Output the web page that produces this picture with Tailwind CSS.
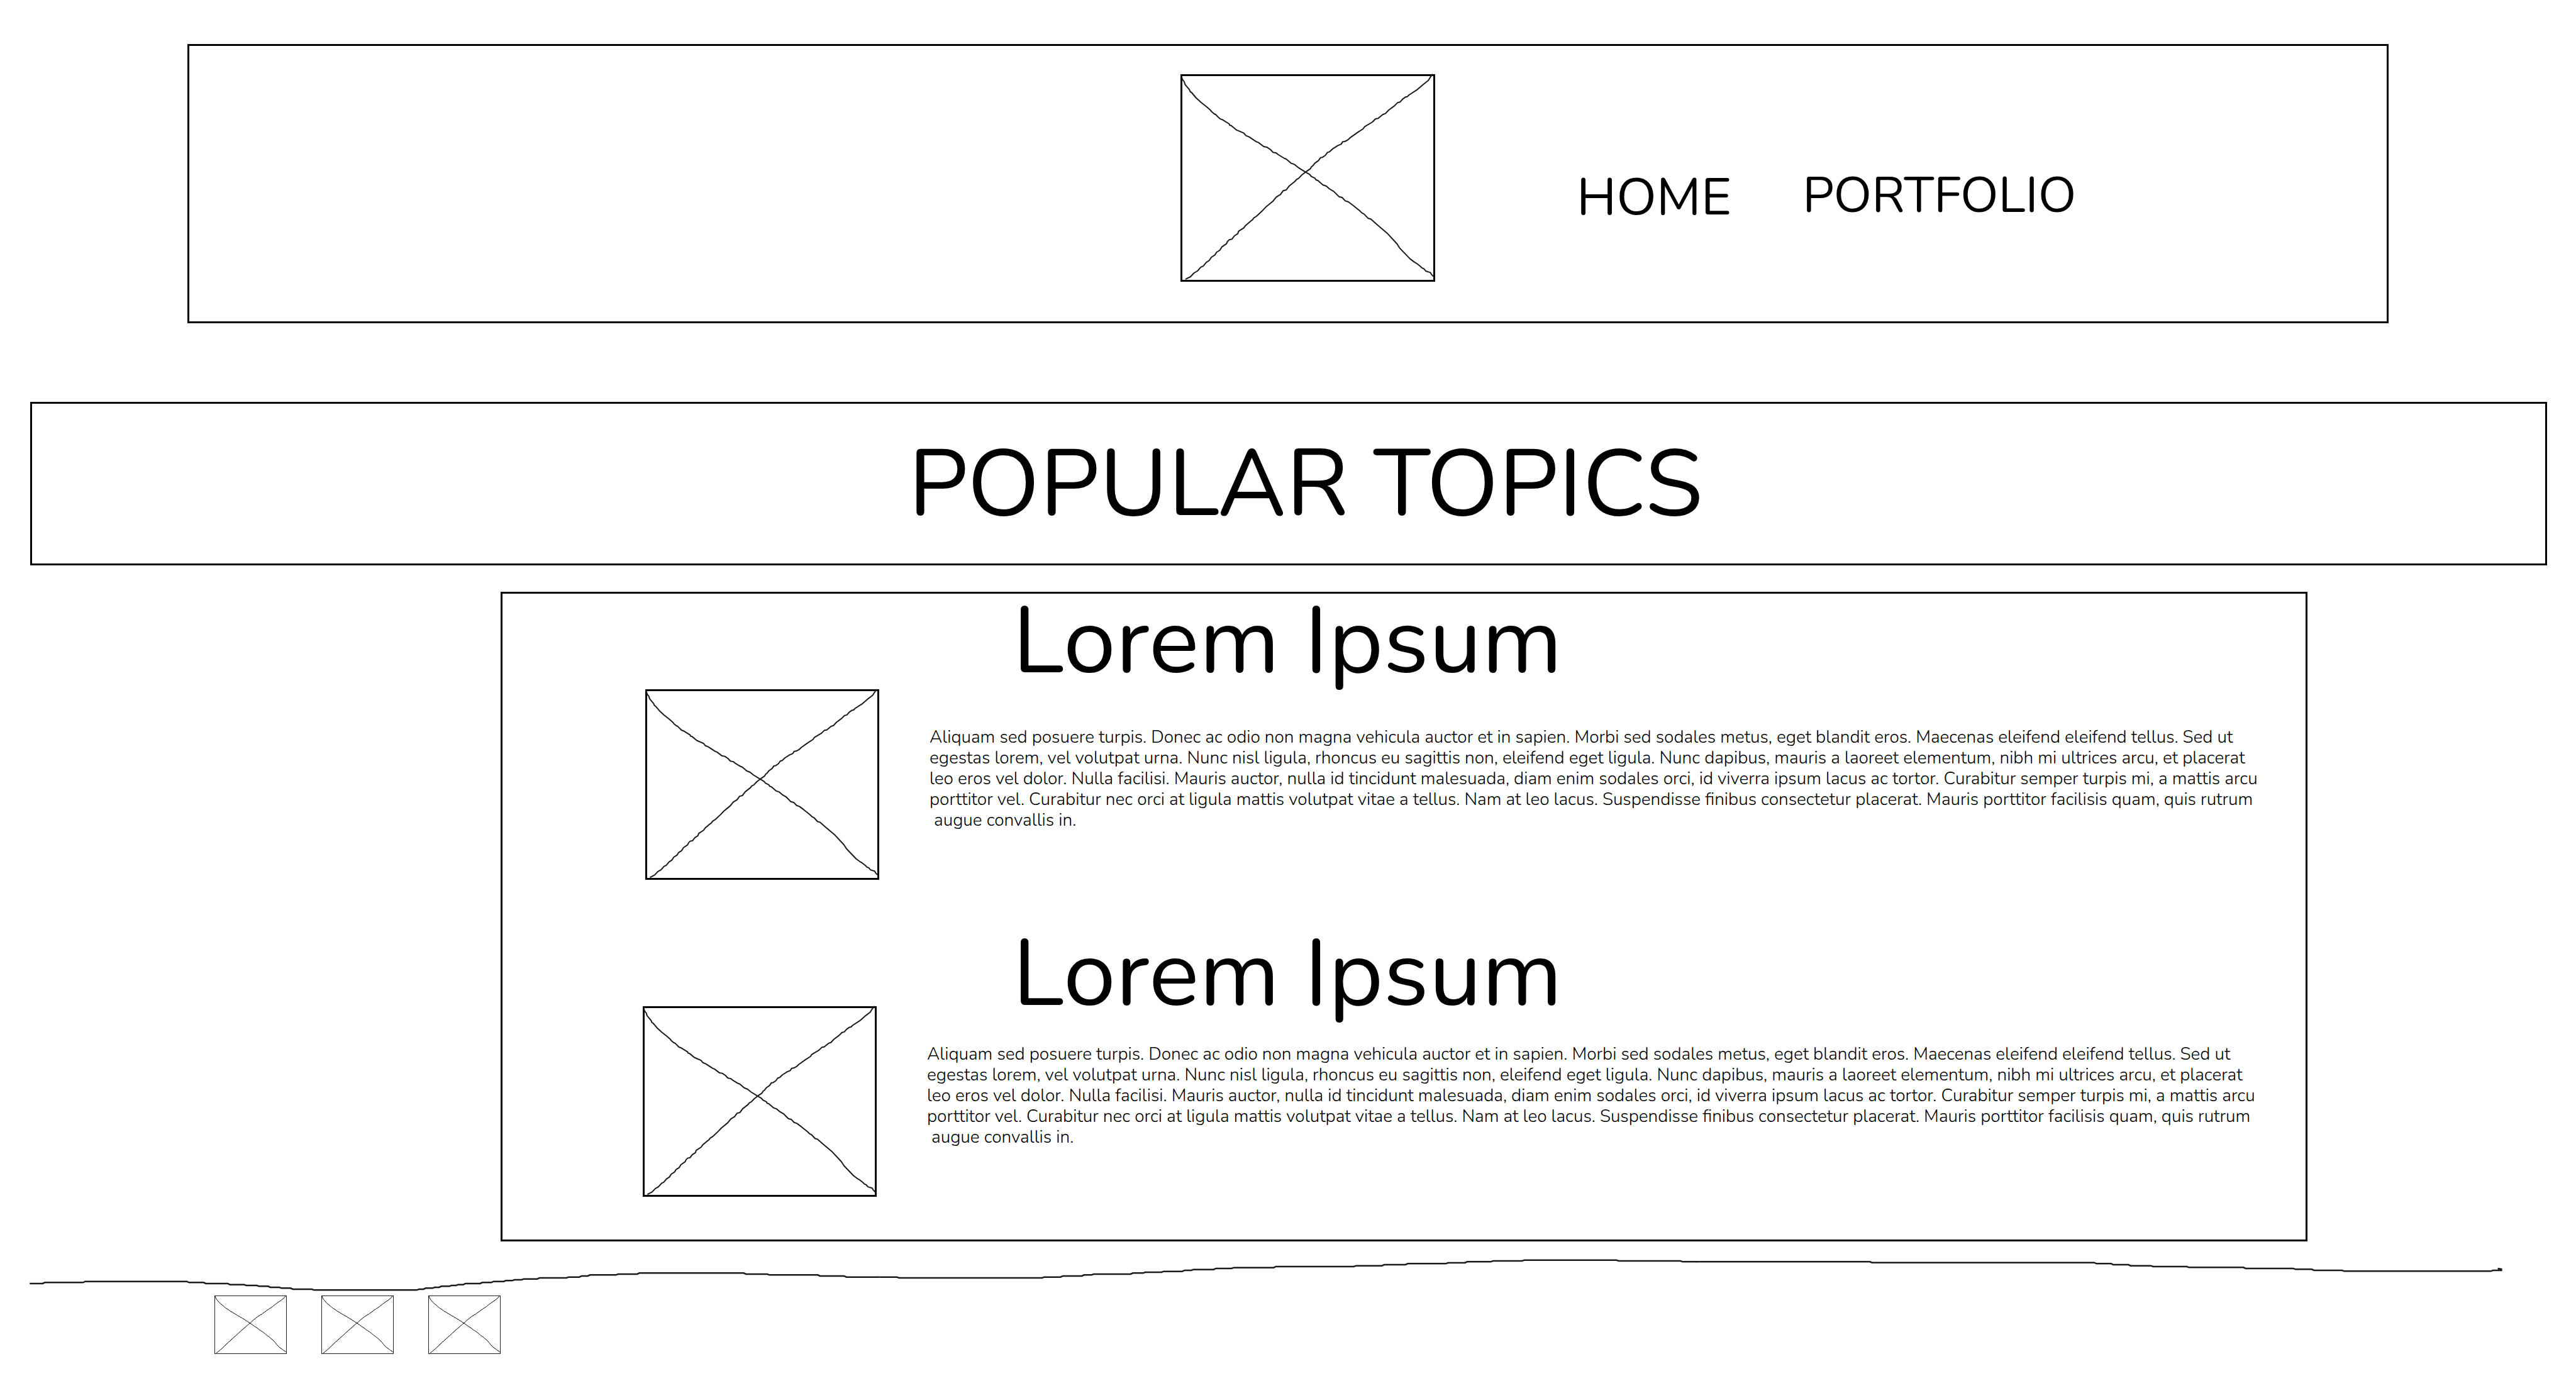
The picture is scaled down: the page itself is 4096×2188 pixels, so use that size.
<!DOCTYPE html>
<html lang="en">
<head>
<meta charset="utf-8">
<meta name="viewport" content="width=device-width, initial-scale=1">
<title>Popular Topics</title>
<script src="https://cdn.jsdelivr.net/npm/@tailwindcss/browser@4"></script>
</head>
<body class="bg-white font-['Nunito',sans-serif] text-black">

<!-- Hand-drawn cross shared by every picture placeholder -->
<svg class="absolute size-0" aria-hidden="true">
  <defs>
    <g id="cross" fill="none" stroke-linejoin="round" stroke-linecap="round">
      <path vector-effect="non-scaling-stroke" d="M60 58L66 78L75 90L79 103L100 128L104 138L110 141L130 165L155 188L180 208L200 225L205 232L218 243L225 246L245 266L258 271L290 291L292 297L300 299L325 320L360 335L370 347L385 353L420 376L430 380L455 399L472 403L488 414L500 427L515 430L525 438L555 456L562 458L585 478L603 485L620 499L655 521L675 532L682 541L700 550L705 558L714 561L738 582L755 588L768 600L790 613L815 638L830 642L845 658L860 663L880 678L910 702L915 706L925 716L935 721L955 742L967 745L1000 774L1045 812L1085 855L1093 864L1105 883L1155 935L1175 950L1187 957L1205 971L1210 977L1222 983L1230 993L1252 1000L1258 1010L1270 1022"/>
      <path vector-effect="non-scaling-stroke" d="M83 1031L105 1020L122 1002L138 993L155 974L165 970L180 952L195 942L205 927L222 916L230 903L245 894L255 878L277 863L282 852L290 844L303 841L315 825L331 815L335 803L360 787L368 776L395 753L402 748L407 740L420 732L450 704L465 688L500 659L515 640L535 628L548 610L563 606L577 587L605 565L612 556L622 551L637 535L655 521L678 505L684 495L690 491L700 478L717 466L727 452L735 451L750 441L760 427L770 424L785 410L810 394L825 388L833 376L843 375L858 367L870 356L905 331L930 315L938 304L975 282L990 267L1002 265L1025 246L1037 242L1053 225L1080 205L1095 190L1107 187L1120 172L1133 163L1142 161L1150 153L1190 127L1220 101L1242 84L1252 68L1262 55"/>
    </g>
  </defs>
</svg>

<header class="mt-[70px] mr-[298px] ml-[298px] flex h-[444px] items-start border-3 border-black pt-[45px] pl-[1576px]">
  <svg class="h-[330px] w-[405px] shrink-0 overflow-visible border-3 border-black stroke-[#1a1a1a] stroke-2" viewBox="66 63 1200 972" preserveAspectRatio="none" role="img" aria-label="Logo"><use href="#cross"/></svg>
  <nav class="mt-[154px] ml-[225px] flex items-start gap-[113px] leading-none">
    <a href="#home" class="text-[83px] leading-none">HOME</a>
    <a href="#portfolio" class="text-[79px] leading-none">PORTFOLIO</a>
  </nav>
</header>

<main>
  <div class="mt-[125px] mr-[46px] ml-12 flex h-[260px] justify-center border-3 border-black pt-[53px] pl-[54px]">
    <h1 class="text-[150px] leading-none">POPULAR TOPICS</h1>
  </div>

  <section class="mt-[42px] mr-[427px] ml-[796px] border-3 border-black pt-px pb-[68px]">
    <article class="flex items-start pl-[227px]">
      <svg class="mt-[151px] h-[303px] w-[372px] shrink-0 overflow-visible border-3 border-black stroke-[#1a1a1a] stroke-2" viewBox="66 63 1200 972" preserveAspectRatio="none" role="img" aria-label="Topic picture"><use href="#cross"/></svg>
      <div class="ml-20">
        <h2 class="ml-[132px] text-[150px] leading-none">Lorem Ipsum</h2>
        <p class="mt-[61px] text-[28px] leading-[33px] font-[360] whitespace-nowrap">Aliquam sed posuere turpis. Donec ac odio non magna vehicula auctor et in sapien. Morbi sed sodales metus, eget blandit eros. Maecenas eleifend eleifend tellus. Sed ut<br>egestas lorem, vel volutpat urna. Nunc nisl ligula, rhoncus eu sagittis non, eleifend eget ligula. Nunc dapibus, mauris a laoreet elementum, nibh mi ultrices arcu, et placerat<br>leo eros vel dolor. Nulla facilisi. Mauris auctor, nulla id tincidunt malesuada, diam enim sodales orci, id viverra ipsum lacus ac tortor. Curabitur semper turpis mi, a mattis arcu<br>porttitor vel. Curabitur nec orci at ligula mattis volutpat vitae a tellus. Nam at leo lacus. Suspendisse finibus consectetur placerat. Mauris porttitor facilisis quam, quis rutrum<br>&nbsp;augue convallis in.</p>
      </div>
    </article>

    <article class="mt-[75px] flex items-start pl-[223px]">
      <svg class="mt-[126px] h-[303px] w-[372px] shrink-0 overflow-visible border-3 border-black stroke-[#1a1a1a] stroke-2" viewBox="66 63 1200 972" preserveAspectRatio="none" role="img" aria-label="Topic picture"><use href="#cross"/></svg>
      <div class="ml-20">
        <h2 class="ml-[136px] text-[150px] leading-none">Lorem Ipsum</h2>
        <p class="mt-9 text-[28px] leading-[33px] font-[360] whitespace-nowrap">Aliquam sed posuere turpis. Donec ac odio non magna vehicula auctor et in sapien. Morbi sed sodales metus, eget blandit eros. Maecenas eleifend eleifend tellus. Sed ut<br>egestas lorem, vel volutpat urna. Nunc nisl ligula, rhoncus eu sagittis non, eleifend eget ligula. Nunc dapibus, mauris a laoreet elementum, nibh mi ultrices arcu, et placerat<br>leo eros vel dolor. Nulla facilisi. Mauris auctor, nulla id tincidunt malesuada, diam enim sodales orci, id viverra ipsum lacus ac tortor. Curabitur semper turpis mi, a mattis arcu<br>porttitor vel. Curabitur nec orci at ligula mattis volutpat vitae a tellus. Nam at leo lacus. Suspendisse finibus consectetur placerat. Mauris porttitor facilisis quam, quis rutrum<br>&nbsp;augue convallis in.</p>
      </div>
    </article>
  </section>
</main>

<footer>
  <!-- Wavy divider -->
  <svg class="block h-[86px] w-full fill-none stroke-[#1a1a1a] stroke-[2.5]" viewBox="0 1977 4101 86" preserveAspectRatio="none" aria-hidden="true">
    <g transform="translate(0 1940) scale(.8929 .3333)">
      <path vector-effect="non-scaling-stroke" d="M53 312H76L80 307H148L152 302H333L337 307H363L367 312H406L410 317H435L439 321H458L462 325H478L482 330H498L502 334H518L522 339H556L560 343H743L747 339H755L759 334H771L775 330H783L787 325H801L805 321H813L817 317H826L830 312H856L860 307H876L880 302H898L902 298H913L917 294H930L934 290H958L962 285H1010L1014 281H1033L1037 276H1048L1052 271H1098L1102 267H1136L1140 262H1326L1330 267H1368L1372 271H1458L1462 276H1505L1509 281H1568"/>
    </g>
    <g transform="translate(1400 1940) scale(.8929 .3333)">
      <path vector-effect="non-scaling-stroke" d="M0 281H31L35 285H290L294 281H323L327 276H361L365 271H378L382 267H448L452 262H470L474 258H503L507 254H540L544 249H556L560 245H596L600 240H628L632 236H703L707 231H846L850 227H896L900 222H938L942 217H1010L1014 213H1044L1048 208H1090L1094 204H1146L1150 200H1314L1318 204H1428L1432 208H1457"/>
    </g>
    <g transform="translate(2700 1940) scale(.8929 .3333)">
      <path vector-effect="non-scaling-stroke" d="M0 208H310L314 212H710L714 217H740L744 222H771L775 227H811L815 231H875L879 235H976L980 240H1065L1069 244H1098L1102 249H1152L1156 253H1417L1421 249H1436V243L1431 241V246H1435"/>
    </g>
  </svg>
  <div class="flex gap-[55px] pb-9 pl-[341px]">
    <svg class="h-[93px] w-[115px] overflow-visible border border-[#222] stroke-black stroke-1" viewBox="60 57 1212 984" preserveAspectRatio="none" role="img" aria-label="Social link 1"><use href="#cross"/></svg>
    <svg class="h-[93px] w-[115px] overflow-visible border border-[#222] stroke-black stroke-1" viewBox="60 57 1212 984" preserveAspectRatio="none" role="img" aria-label="Social link 2"><use href="#cross"/></svg>
    <svg class="h-[93px] w-[115px] overflow-visible border border-[#222] stroke-black stroke-1" viewBox="60 57 1212 984" preserveAspectRatio="none" role="img" aria-label="Social link 3"><use href="#cross"/></svg>
  </div>
</footer>
</body>
</html>
